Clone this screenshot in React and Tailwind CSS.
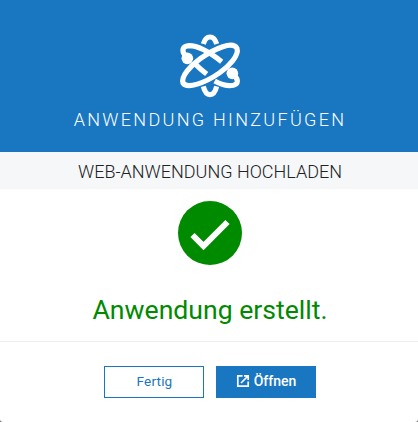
function AtomLogo() {
  return (
    <svg className="size-20" viewBox="0 0 240 240" fill="none" stroke="#fff" strokeWidth="15.5">
      <path d="M100 57C108 29 132 29 140 57" />
      <path d="M100 184C108 217 132 217 140 184" />
      <path d="M201 70C208 90 178 123 148 144C105 174 51 193 39 174C32 154 62 121 92 100C135 70 189 47 201 70Z" />
      <path d="M46 92C34 77 36 63 58 62C88 62 122 84 155 110" />
      <path d="M76 117C86 128 97 137 110 147" />
      <path d="M134 168C154 179 175 184 190 181C206 177 205 164 193 150" />
      <circle cx="52" cy="100" r="17.5" fill="#fff" stroke="none" />
      <circle cx="187" cy="145" r="17.5" fill="#fff" stroke="none" />
    </svg>
  );
}

export default function App() {
  return (
    <div className="h-[422px] w-[418px] overflow-hidden bg-[#777]">
      <main className="flex h-full flex-col items-stretch rounded-b-[3px] bg-white text-center font-[Roboto,sans-serif]">
        <header className="flex h-[152px] flex-col items-center bg-[#1976c1] pt-[25px] pl-[2px] text-white">
          <AtomLogo />
          <h1 className="pt-[1px] text-[18px] leading-[28px] font-light tracking-[2.3px] whitespace-nowrap">ANWENDUNG HINZUFÜGEN</h1>
        </header>
        <h2 className="h-[37px] bg-[#f5f7f9] pt-[1px] pl-[2px] text-[18px] leading-[37px] font-light whitespace-nowrap text-[#222]">WEB-ANWENDUNG HOCHLADEN</h2>
        <section className="flex h-[153px] flex-col items-center border-b border-[#eee] pt-[12px] pl-[2px] text-[#008a00]">
          <svg className="size-16" viewBox="0 0 64 64">
            <circle cx="32" cy="32" r="32" fill="#008a00" />
            <path d="M14.5 34L25.500 45L49.500 21" fill="none" stroke="#fff" strokeWidth="6" />
          </svg>
          <p className="pt-[25px] text-[26.6px] leading-[40px] whitespace-nowrap">Anwendung erstellt.</p>
        </section>
        <footer className="flex justify-center gap-3 pt-6 pl-[2px]">
          <button className="h-8 w-[100px] border border-[#1976c1] pb-[2px] pl-[1px] text-[13.6px] leading-[28px] tracking-[0.15px] text-[#1976c1]">Fertig</button>
          <button className="flex h-8 w-[100px] items-center justify-center gap-[4px] bg-[#1976c1] pb-[2px] text-[14px] font-medium text-white">
            <svg className="size-[14px]" viewBox="0 0 14 14" fill="none" stroke="currentColor" strokeWidth="1.7">
              <path d="M6.500 1.800H1.800V12.200H12.200V7.500M8 1.800H12.200V6M12 2L5 9" />
            </svg>
            Öffnen
          </button>
        </footer>
      </main>
    </div>
  );
}
